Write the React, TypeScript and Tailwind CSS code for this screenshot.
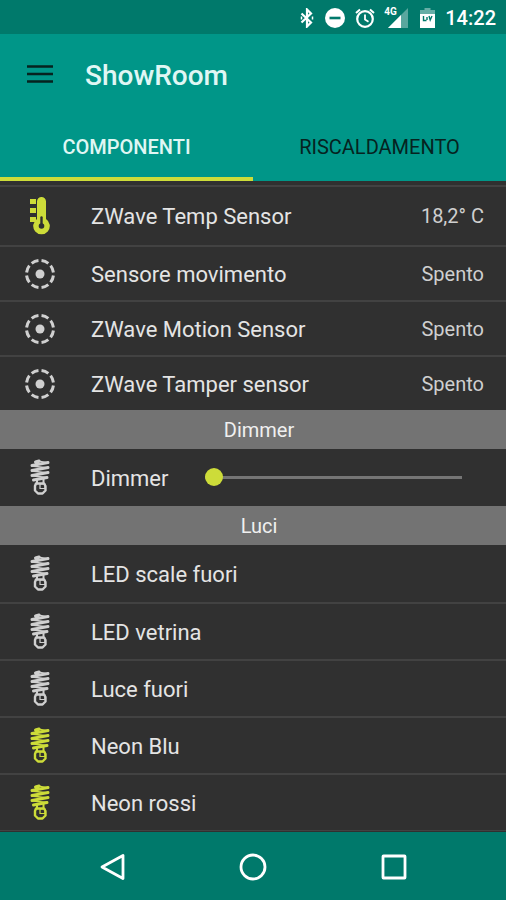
import { useState } from 'react';
import clsx from 'clsx';

type IconName = 'thermometer' | 'motion' | 'bulb';

interface Item {
    name: string;
    icon: IconName;
    value?: string;
    active?: boolean;
}

const sensors: Item[] = [
    { name: 'ZWave Temp Sensor', icon: 'thermometer', value: '18,2° C', active: true },
    { name: 'Sensore movimento', icon: 'motion', value: 'Spento' },
    { name: 'ZWave Motion Sensor', icon: 'motion', value: 'Spento' },
    { name: 'ZWave Tamper sensor', icon: 'motion', value: 'Spento' },
];

const lights: Item[] = [
    { name: 'LED scale fuori', icon: 'bulb' },
    { name: 'LED vetrina', icon: 'bulb' },
    { name: 'Luce fuori', icon: 'bulb' },
    { name: 'Neon Blu', icon: 'bulb', active: true },
    { name: 'Neon rossi', icon: 'bulb', active: true },
];

const ThermometerIcon = () => (
    <svg width="40" height="40" viewBox="0 0 40 40" fill="currentColor" aria-hidden="true">
        <path d="M10 3h6v5h-6zM10 12h6v5h-6zM10 21h6v5h-6z" />
        <path d="M17 5.500a4.500 4.500 0 0 1 9 0v17.500a8.300 8.300 0 1 1-9 0z" />
        <path d="M21.500 21.500v8" stroke="#303030" strokeWidth="2.400" strokeLinecap="round" />
        <circle cx="21.500" cy="30" r="2.800" fill="#303030" />
    </svg>
);

const MotionIcon = () => (
    <svg width="40" height="40" viewBox="0 0 40 40" fill="none" aria-hidden="true">
        <circle
            cx="20"
            cy="20"
            r="13.500"
            stroke="currentColor"
            strokeWidth="3"
            pathLength="80"
            strokeDasharray="7 3"
            strokeDashoffset="-1.500"
        />
        <circle cx="20" cy="20" r="4.500" fill="currentColor" />
    </svg>
);

const BulbIcon = () => (
    <svg
        width="40"
        height="40"
        viewBox="0 0 40 40"
        fill="none"
        stroke="currentColor"
        strokeLinecap="round"
        aria-hidden="true"
    >
        <path
            d="M15.500 4l3.500-1M12 7.500L28 4.500M12 12.500L28 9.500M12 17.500L28 14.500M13.500 22L27 19.500"
            strokeWidth="3"
        />
        <path d="M18 3L28 5M12 8L28 10M12 13L28 15M13 18L27 19.500" strokeWidth="1.400" />
        <path d="M17 22v3.500M23.500 21v4" strokeWidth="2" />
        <path
            d="M16 25.500h8l1.500 2.500v4.500l-3 3h-4.500l-3-3v-4.500z"
            strokeWidth="2.400"
            strokeLinejoin="round"
        />
        <path d="M20 26v4.500h5v-4.500z" strokeWidth="1.200" />
    </svg>
);

const icons = {
    thermometer: ThermometerIcon,
    motion: MotionIcon,
    bulb: BulbIcon,
};

const StatusBar = () => (
    <div className="flex h-[34px] items-center justify-end bg-[#00796b] pt-0.5 pr-[10px] text-white">
        <svg width="16" height="20" viewBox="0 0 16 20" fill="none" aria-hidden="true">
            <path
                d="M2.500 5.500l9.500 9-4 4V1.500l4 4-9.500 9"
                stroke="currentColor"
                strokeWidth="2.200"
            />
            <path d="M13.500 8.500v3M2.500 8.500v3" stroke="currentColor" strokeWidth="1.500" />
        </svg>
        <svg className="ml-[10px]" width="20" height="20" viewBox="0 0 20 20" aria-hidden="true">
            <circle cx="10" cy="10" r="10" fill="currentColor" />
            <path d="M4.500 10h11" stroke="#00796b" strokeWidth="2.600" />
        </svg>
        <svg
            className="ml-[10px]"
            width="20"
            height="20"
            viewBox="0 0 20 20"
            fill="none"
            stroke="currentColor"
            aria-hidden="true"
        >
            <circle cx="10" cy="11" r="7.800" strokeWidth="2.200" />
            <path d="M10 6.500v5l3.500 2.200" strokeWidth="1.800" />
            <path d="M1 5l4-3.500M19 5l-4-3.500" strokeWidth="2" />
        </svg>
        <div className="relative ml-[9px] h-5 w-6">
            <svg className="ml-auto" width="20" height="20" viewBox="0 0 20 20" aria-hidden="true">
                <path d="M0 20L20 0v20z" fill="currentColor" fillOpacity="0.350" />
                <path d="M0 20L13 7v13z" fill="currentColor" />
            </svg>
            <span className="absolute -top-px left-0 text-[10px] leading-[10px] font-bold">4G</span>
        </div>
        <svg className="ml-[12px]" width="15" height="20" viewBox="0 0 15 20" aria-hidden="true">
            <path d="M4.500 0h6v2H15v4H0V2h4.500z" fill="currentColor" fillOpacity="0.400" />
            <path d="M0 6h15v14H0z" fill="currentColor" />
            <path
                d="M3.500 8v4.500h3M7 9v3M9 8l1.200 4L12 8"
                fill="none"
                stroke="#00796b"
                strokeWidth="1.400"
            />
        </svg>
        <span className="ml-[10px] text-[20px] leading-6 font-medium">14:22</span>
    </div>
);

const Row = ({ name, icon, value, active }: Item) => {
    const Icon = icons[icon];
    return (
        <li
            className={clsx(
                'flex items-center border-t-2 border-[#424242] px-5 first:border-t-0',
                icon === 'thermometer' && 'h-[58px]',
                icon === 'motion' && 'h-[55px]',
                icon === 'bulb' && 'h-[57px]',
            )}
        >
            <span className={active ? 'text-[#cddc39]' : 'text-[#d0d0d0]'}>
                <Icon />
            </span>
            <span className="ml-[31px] flex-1 pt-0.5 text-[22px] leading-7 text-[#e4e4e4]">
                {name}
            </span>
            {value && <span className="pr-[2px] text-[20px] leading-6 text-[#cfcfcf]">{value}</span>}
        </li>
    );
};

const SectionTitle = ({ children }: { children: string }) => (
    <h2 className="flex h-[39px] items-center justify-center bg-[#737373] pl-3 text-[20px] leading-6 text-[#f0f0f0]">
        {children}
    </h2>
);

const Tab = ({
    label,
    selected,
    onClick,
}: {
    label: string;
    selected: boolean;
    onClick: () => void;
}) => (
    <button
        type="button"
        role="tab"
        aria-selected={selected}
        onClick={onClick}
        className={clsx(
            'h-[66px] flex-1 border-b-4 pt-0.5 text-[20px] leading-6',
            selected
                ? 'border-[#cddc39] font-medium text-[#e0f7f4]'
                : 'border-transparent text-[#06231f]',
        )}
    >
        {label}
    </button>
);

const App = () => {
    const [tab, setTab] = useState(0);
    const [level, setLevel] = useState(0);

    return (
        <div className="flex min-h-screen flex-col bg-[#303030] font-[Roboto,sans-serif]">
            <StatusBar />
            <header className="bg-[#009688]">
                <div className="flex h-[81px] items-center px-[26px]">
                    <button type="button" aria-label="Menu" className="text-[#06231f]">
                        <svg width="28" height="20" viewBox="0 0 28 20" aria-hidden="true">
                            <path
                                d="M1 1.500h26M1 9h26M1 16.500h26"
                                stroke="currentColor"
                                strokeWidth="2.600"
                            />
                        </svg>
                    </button>
                    <h1 className="ml-[31px] pt-0.5 text-[28px] leading-8 font-medium text-[#e0f7f4]">
                        ShowRoom
                    </h1>
                </div>
                <div role="tablist" className="flex">
                    <Tab label="COMPONENTI" selected={tab === 0} onClick={() => setTab(0)} />
                    <Tab label="RISCALDAMENTO" selected={tab === 1} onClick={() => setTab(1)} />
                </div>
            </header>

            <main className="flex-1 pt-1">
                <ul className="border-t-2 border-[#424242]">
                    {sensors.map((item) => (
                        <Row key={item.name} {...item} />
                    ))}
                </ul>

                <SectionTitle>Dimmer</SectionTitle>
                <div className="flex h-[57px] items-center px-5 text-[#d0d0d0]">
                    <BulbIcon />
                    <label
                        htmlFor="dimmer"
                        className="ml-[31px] pt-0.5 text-[22px] leading-7 text-[#e4e4e4]"
                    >
                        Dimmer
                    </label>
                    <input
                        id="dimmer"
                        type="range"
                        min={0}
                        max={100}
                        value={level}
                        onChange={(e) => setLevel(Number(e.target.value))}
                        className="mr-6 ml-9 h-[18px] min-w-0 flex-1 appearance-none bg-transparent [&::-webkit-slider-runnable-track]:h-[3px] [&::-webkit-slider-runnable-track]:bg-[#757575] [&::-webkit-slider-thumb]:-mt-2 [&::-webkit-slider-thumb]:size-[18px] [&::-webkit-slider-thumb]:appearance-none [&::-webkit-slider-thumb]:rounded-full [&::-webkit-slider-thumb]:bg-[#cddc39]"
                    />
                </div>

                <SectionTitle>Luci</SectionTitle>
                <ul className="border-b border-[#424242]">
                    {lights.map((item) => (
                        <Row key={item.name} {...item} />
                    ))}
                </ul>
            </main>

            <nav className="flex h-[68px] items-center justify-center gap-[113px] bg-[#00796b] pt-0.5 text-white">
                <button type="button" aria-label="Back">
                    <svg width="28" height="28" viewBox="0 0 28 28" fill="none" aria-hidden="true">
                        <path
                            d="M25 2.500v23L4 14z"
                            stroke="currentColor"
                            strokeWidth="2.800"
                            strokeLinejoin="round"
                        />
                    </svg>
                </button>
                <button type="button" aria-label="Home">
                    <svg width="28" height="28" viewBox="0 0 28 28" fill="none" aria-hidden="true">
                        <circle cx="14" cy="14" r="12" stroke="currentColor" strokeWidth="2.800" />
                    </svg>
                </button>
                <button type="button" aria-label="Recent apps">
                    <svg width="28" height="28" viewBox="0 0 28 28" fill="none" aria-hidden="true">
                        <rect
                            x="3"
                            y="3"
                            width="22"
                            height="22"
                            rx="0.500"
                            stroke="currentColor"
                            strokeWidth="2.800"
                        />
                    </svg>
                </button>
            </nav>
        </div>
    );
};

export default App;
